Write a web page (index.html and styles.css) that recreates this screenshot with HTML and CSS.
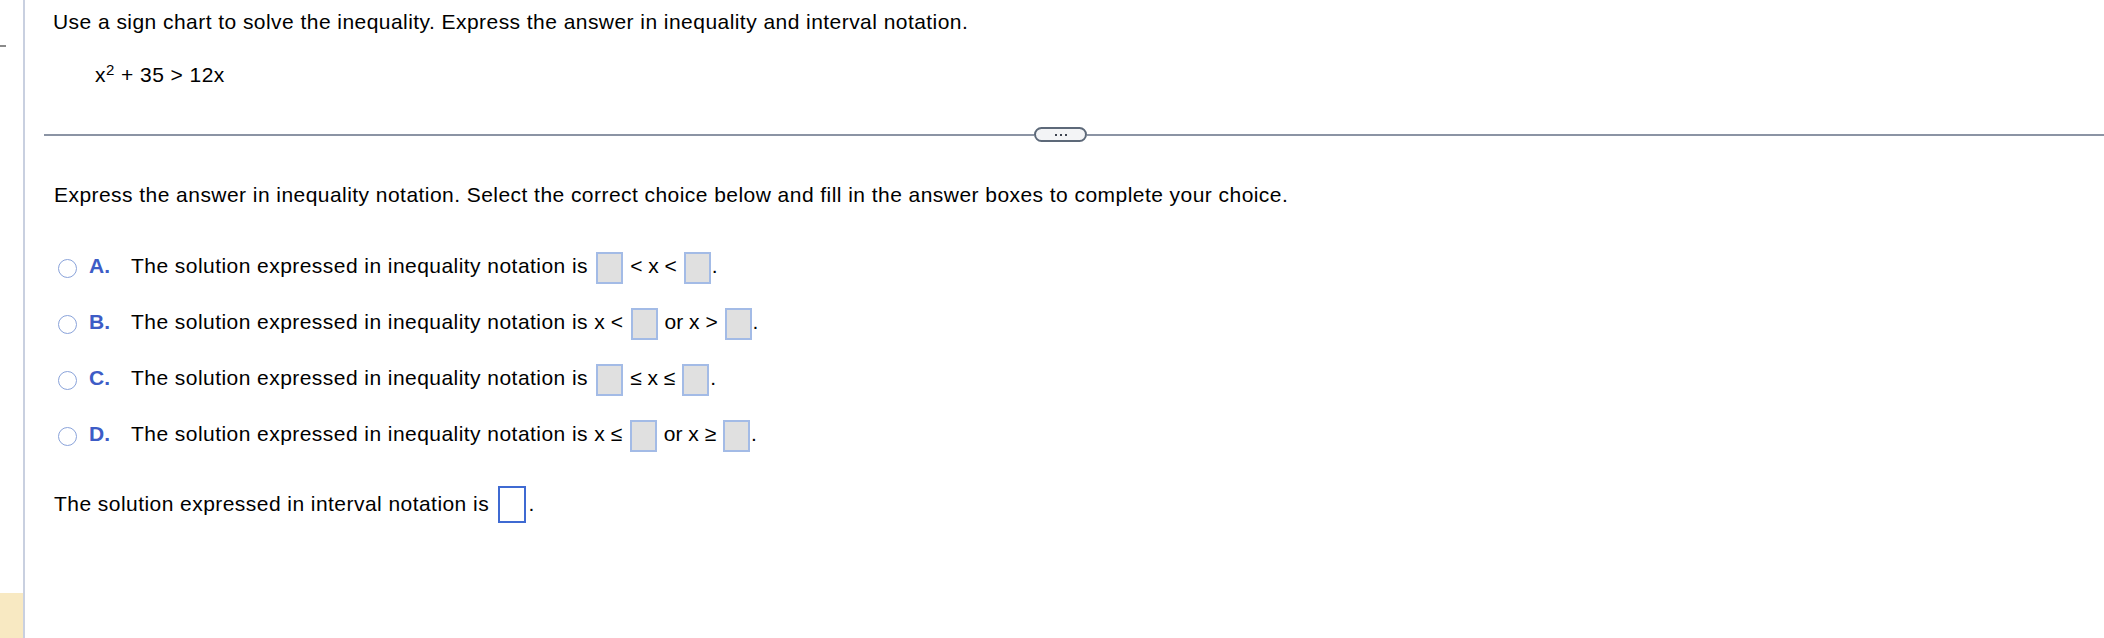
FILE: index.html
```html
<!DOCTYPE html>
<html>
<head>
<meta charset="utf-8">
<link rel="stylesheet" href="styles.css">
</head>
<body>
<div class="page">
  <aside class="gutter">
    <span class="dash"></span>
    <div class="flag"></div>
  </aside>
  <main class="content">
    <section class="question">
      <p class="prompt">Use a sign chart to solve the inequality. Express the answer in inequality and interval notation.</p>
      <p class="eq">x<sup>2</sup> + 35 &gt; 12x</p>
    </section>
    <div class="divider">
      <span class="rule"></span>
      <span class="pill"><i></i><i></i><i></i></span>
      <span class="rule"></span>
    </div>
    <section class="answer">
      <p class="instr">Express the answer in inequality notation. Select the correct choice below and fill in the answer boxes to complete your choice.</p>
      <div class="choices">
        <div class="choice"><span class="radio"></span><span class="letter">A.</span><span class="stmt">The solution expressed in inequality notation is <span class="m"><span class="box"></span> &lt; x &lt; <span class="box"></span>.</span></span></div>
        <div class="choice"><span class="radio"></span><span class="letter">B.</span><span class="stmt">The solution expressed in inequality notation is <span class="m">x &lt; <span class="box"></span> or x &gt; <span class="box"></span>.</span></span></div>
        <div class="choice"><span class="radio"></span><span class="letter">C.</span><span class="stmt">The solution expressed in inequality notation is <span class="m"><span class="box"></span> ≤ x ≤ <span class="box"></span>.</span></span></div>
        <div class="choice"><span class="radio"></span><span class="letter">D.</span><span class="stmt">The solution expressed in inequality notation is <span class="m">x ≤ <span class="box"></span> or x ≥ <span class="box"></span>.</span></span></div>
      </div>
      <p class="interval">The solution expressed in interval notation is <span class="ibox"></span>.</p>
    </section>
  </main>
</div>
</body>
</html>
```
FILE: styles.css
```css
html, body {
  margin: 0;
  padding: 0;
  background: #ffffff;
}
body {
  font-family: "Liberation Sans", Arial, Helvetica, sans-serif;
  font-size: 21px;
  letter-spacing: 0.45px;
  color: #000000;
}
.page {
  display: flex;
  height: 638px;
  overflow: hidden;
}
.gutter {
  width: 23px;
  flex: none;
  border-right: 2px solid #c9d0e0;
  display: flex;
  flex-direction: column;
  justify-content: space-between;
}
.dash {
  display: block;
  width: 6px;
  height: 2px;
  background: #8a8a8a;
  margin-top: 45px;
}
.flag {
  height: 45px;
  background: #f8e9c2;
}
.content {
  flex: 1;
  min-width: 0;
}
p {
  margin: 0;
  line-height: 24px;
}
.question {
  padding: 10px 0 0 28px;
}
.eq {
  margin-top: 29px;
  padding-left: 42px;
}
.eq sup {
  font-size: 15px;
  line-height: 0;
  vertical-align: 7px;
}
.divider {
  display: flex;
  align-items: center;
  margin: 40px 0 0 19px;
}
.rule {
  height: 2px;
  background: #8b94a4;
}
.rule:first-child {
  width: 990px;
}
.rule:last-child {
  flex: 1;
}
.pill {
  width: 49px;
  height: 11px;
  border: 2px solid #5d6979;
  border-radius: 8px;
  background: #f3f4f6;
  display: flex;
  align-items: center;
  justify-content: center;
  gap: 3px;
}
.pill i {
  width: 2px;
  height: 2px;
  background: #3e4450;
}
.answer {
  padding-left: 29px;
}
.instr {
  margin-top: 41px;
}
.choices {
  margin-top: 45px;
  padding-left: 4px;
  display: flex;
  flex-direction: column;
  gap: 24px;
}
.choice {
  display: flex;
  align-items: baseline;
  line-height: 24px;
}
.radio {
  width: 17px;
  height: 17px;
  border: 1.5px solid #8aa3da;
  border-radius: 50%;
  background: #ffffff;
  align-self: center;
  flex: none;
}
.letter {
  font-weight: bold;
  color: #3d5cc6;
  margin-left: 12px;
  width: 42px;
  flex: none;
  letter-spacing: 0;
}
.m {
  letter-spacing: 0;
}
.box {
  display: inline-block;
  width: 23px;
  height: 28px;
  border: 2px solid #a3bbe6;
  background: #e0e0e0;
  vertical-align: -11px;
  margin: 0 1px;
}
.m > .box:first-child {
  margin-left: 2px;
}
.interval {
  margin-top: 34px;
}
.ibox {
  display: inline-block;
  width: 24px;
  height: 33px;
  border: 2px solid #3f6ad2;
  background: #ffffff;
  vertical-align: -12px;
  margin: 0 2px 0 3px;
}
```
